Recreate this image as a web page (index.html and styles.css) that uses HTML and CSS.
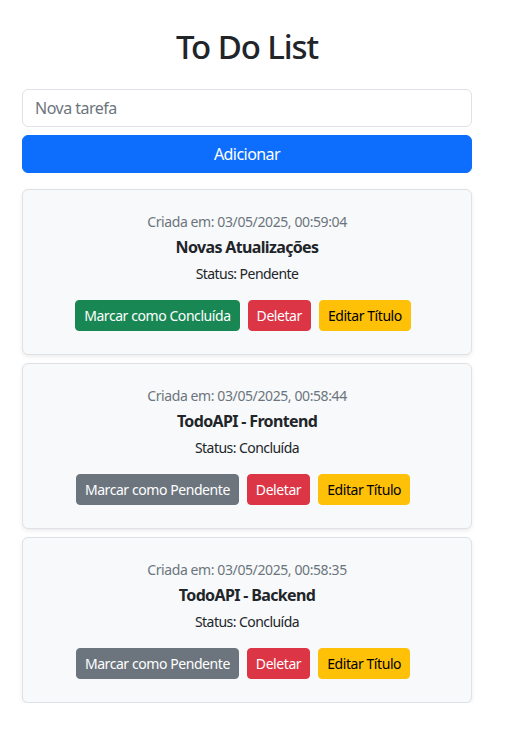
FILE: index.html
```html
<!DOCTYPE html>
<html lang="pt-BR">
<head>
<meta charset="utf-8">
<title>To Do List</title>
<link rel="stylesheet" href="styles.css">
</head>
<body>
<main class="container">
  <h1 class="title">To Do List</h1>
  <form class="add-form">
    <input class="input" type="text" placeholder="Nova tarefa">
    <button class="btn btn-primary btn-block" type="button">Adicionar</button>
  </form>
  <ul class="list">
    <li class="card">
      <p class="date">Criada em: 03/05/2025, 00:59:04</p>
      <h5 class="task-title">Novas Atualizações</h5>
      <p class="status">Status: Pendente</p>
      <div class="actions">
        <button class="btn btn-sm btn-success">Marcar como Concluída</button>
        <button class="btn btn-sm btn-danger">Deletar</button>
        <button class="btn btn-sm btn-warning">Editar Título</button>
      </div>
    </li>
    <li class="card">
      <p class="date">Criada em: 03/05/2025, 00:58:44</p>
      <h5 class="task-title">TodoAPI - Frontend</h5>
      <p class="status">Status: Concluída</p>
      <div class="actions">
        <button class="btn btn-sm btn-secondary">Marcar como Pendente</button>
        <button class="btn btn-sm btn-danger">Deletar</button>
        <button class="btn btn-sm btn-warning">Editar Título</button>
      </div>
    </li>
    <li class="card">
      <p class="date">Criada em: 03/05/2025, 00:58:35</p>
      <h5 class="task-title">TodoAPI - Backend</h5>
      <p class="status">Status: Concluída</p>
      <div class="actions">
        <button class="btn btn-sm btn-secondary">Marcar como Pendente</button>
        <button class="btn btn-sm btn-danger">Deletar</button>
        <button class="btn btn-sm btn-warning">Editar Título</button>
      </div>
    </li>
  </ul>
</main>
</body>
</html>
```
FILE: styles.css
```css
* { box-sizing: border-box; }
html, body { margin: 0; padding: 0; background: #fff; }
body {
  font-family: "Noto Sans", "Open Sans", sans-serif;
  color: #212529;
  font-size: 16px;
  line-height: 1.5;
}
.container {
  width: 450px;
  margin: 0 0 0 22px;
  padding-top: 27px;
}
.title {
  margin: 0 0 22px;
  text-align: center;
  font-size: 33px;
  font-weight: 500;
  line-height: 1.2;
  letter-spacing: -1.1px;
}
.add-form {
  display: flex;
  flex-direction: column;
  gap: 8px;
  margin-bottom: 16px;
}
.input {
  height: 38px;
  padding: 6px 12px;
  font: inherit;
  font-size: 16px;
  letter-spacing: -0.5px;
  color: #212529;
  border: 1px solid #dee2e6;
  border-radius: 6px;
  background: #fff;
}
.input::placeholder { color: #6c757d; }
.btn {
  font: inherit;
  border: 1px solid transparent;
  border-radius: 6px;
  cursor: pointer;
  color: #fff;
}
.btn-block {
  height: 38px;
  font-size: 16px;
  letter-spacing: -0.55px;
}
.btn-primary { background: #0d6efd; border-color: #0d6efd; }
.btn-sm {
  height: 31px;
  font-size: 14px;
  letter-spacing: -0.43px;
  padding: 0 8px;
  border-radius: 4px;
  margin-right: 8px;
}
.btn-success { background: #198754; border-color: #198754; }
.btn-danger { background: #dc3545; border-color: #dc3545; }
.btn-warning { background: #ffc107; border-color: #ffc107; color: #000; }
.btn-secondary { background: #6c757d; border-color: #6c757d; }
.list {
  list-style: none;
  margin: 0;
  padding: 0;
  display: flex;
  flex-direction: column;
  gap: 8px;
}
.card {
  height: 166px;
  padding: 21px 16px 0;
  background: #f8f9fa;
  border: 1px solid #dee2e6;
  border-radius: 6px;
  box-shadow: 0 2px 4px rgba(0,0,0,0.075);
  text-align: center;
}
.date {
  margin: 0 0 4px;
  font-size: 14px;
  line-height: 21px;
  letter-spacing: -0.4px;
  color: #6c757d;
}
.task-title {
  margin: 0 0 4px;
  font-size: 16px;
  font-weight: 700;
  line-height: 23px;
  letter-spacing: -0.65px;
}
.status {
  margin: 0 0 16px;
  font-size: 14px;
  line-height: 21px;
  letter-spacing: -0.55px;
}
.actions {
  display: flex;
  justify-content: center;
}
```
